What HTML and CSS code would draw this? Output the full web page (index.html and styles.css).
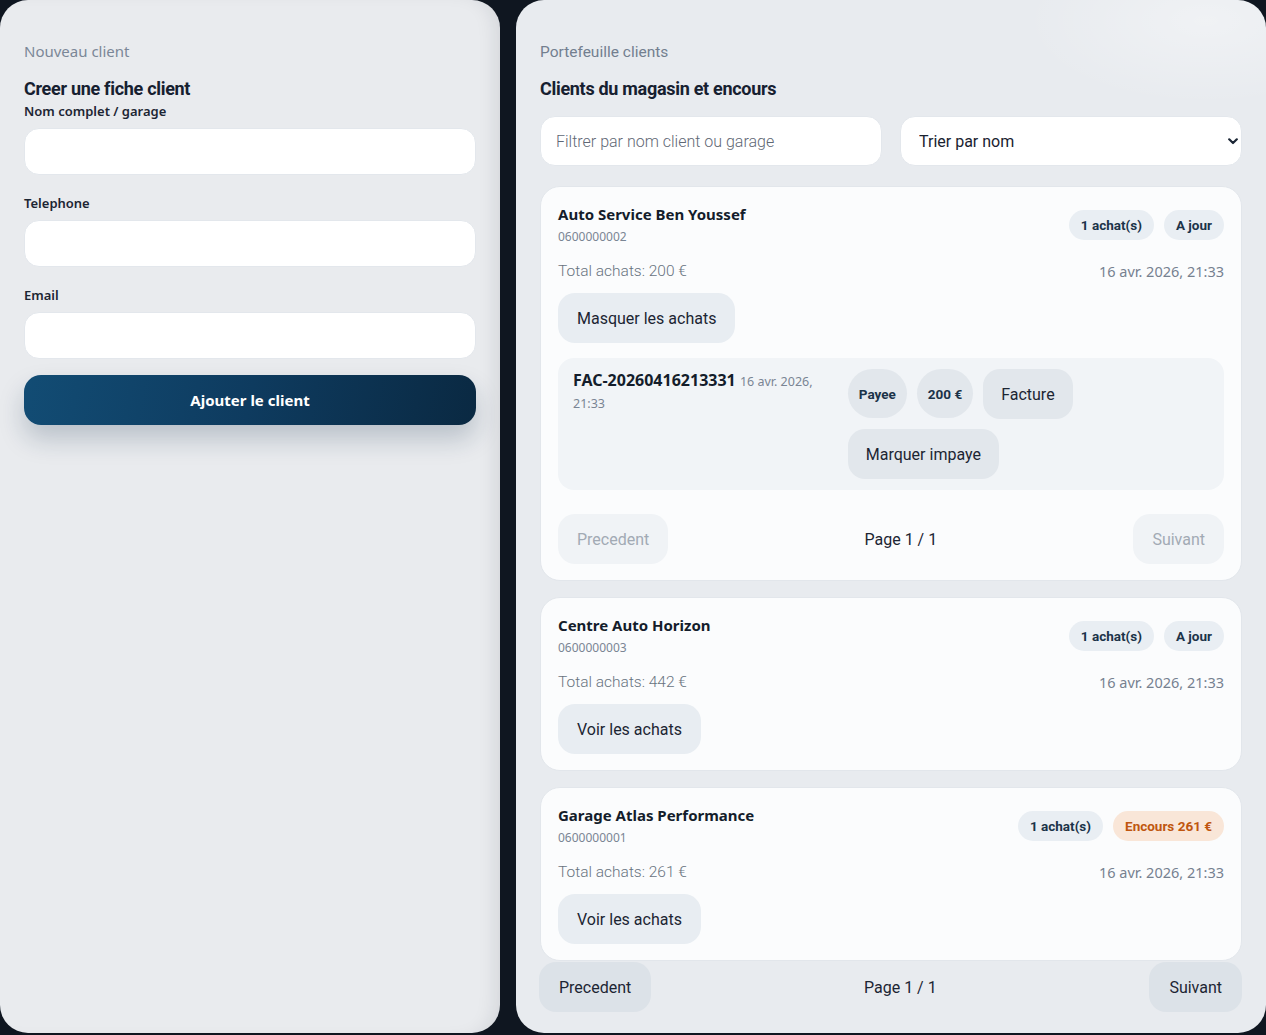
FILE: index.html
```html
<!DOCTYPE html>
<html lang="fr">
<head>
<meta charset="utf-8">
<title>Clients</title>
<link rel="stylesheet" href="styles.css">
</head>
<body>
<div class="layout">
  <section class="panel panel-left">
    <p class="eyebrow">Nouveau client</p>
    <h2 class="title">Creer une fiche client</h2>
    <label class="field-label">Nom complet / garage</label>
    <input class="field-input" type="text">
    <label class="field-label spaced">Telephone</label>
    <input class="field-input" type="text">
    <label class="field-label spaced">Email</label>
    <input class="field-input" type="text">
    <button class="primary-btn">Ajouter le client</button>
  </section>

  <section class="panel panel-right">
    <p class="eyebrow">Portefeuille clients</p>
    <h2 class="title">Clients du magasin et encours</h2>
    <div class="filters">
      <input class="filter-input" type="text" placeholder="Filtrer par nom client ou garage">
      <div class="select-wrap">
        <select class="filter-select"><option>Trier par nom</option></select>
        <svg class="chev" width="10" height="7" viewBox="0 0 10 7"><path d="M1.2 1.3 L5 5 L8.8 1.3" fill="none" stroke="#1b2635" stroke-width="2.2" stroke-linecap="round" stroke-linejoin="round"/></svg>
      </div>
    </div>

    <div class="cards">
      <article class="card">
        <div class="card-head">
          <div>
            <div class="client-name">Auto Service Ben Youssef</div>
            <div class="client-phone">0600000002</div>
          </div>
          <div class="badges">
            <span class="badge">1 achat(s)</span>
            <span class="badge">A jour</span>
          </div>
        </div>
        <div class="card-meta">
          <span>Total achats: 200 €</span>
          <span class="date">16 avr. 2026, 21:33</span>
        </div>
        <button class="soft-btn">Masquer les achats</button>
        <div class="purchases">
          <div class="purchase-info"><span class="inv">FAC-20260416213331</span> <span class="inv-date">16 avr. 2026,</span> <span class="inv-date">21:33</span></div>
          <div class="purchase-actions">
            <span class="pill">Payee</span>
            <span class="pill">200 €</span>
            <button class="act-btn">Facture</button>
            <button class="act-btn">Marquer impaye</button>
          </div>
        </div>
        <div class="pager inner">
          <button class="pager-btn" disabled>Precedent</button>
          <span class="pager-text">Page 1 / 1</span>
          <button class="pager-btn" disabled>Suivant</button>
        </div>
      </article>

      <article class="card">
        <div class="card-head">
          <div>
            <div class="client-name">Centre Auto Horizon</div>
            <div class="client-phone">0600000003</div>
          </div>
          <div class="badges">
            <span class="badge">1 achat(s)</span>
            <span class="badge">A jour</span>
          </div>
        </div>
        <div class="card-meta">
          <span>Total achats: 442 €</span>
          <span class="date">16 avr. 2026, 21:33</span>
        </div>
        <button class="soft-btn">Voir les achats</button>
      </article>

      <article class="card">
        <div class="card-head">
          <div>
            <div class="client-name">Garage Atlas Performance</div>
            <div class="client-phone">0600000001</div>
          </div>
          <div class="badges">
            <span class="badge">1 achat(s)</span>
            <span class="badge warn">Encours 261 €</span>
          </div>
        </div>
        <div class="card-meta">
          <span>Total achats: 261 €</span>
          <span class="date">16 avr. 2026, 21:33</span>
        </div>
        <button class="soft-btn">Voir les achats</button>
      </article>
    </div>

    <div class="pager outer">
      <button class="pager-btn active">Precedent</button>
      <span class="pager-text">Page 1 / 1</span>
      <button class="pager-btn active">Suivant</button>
    </div>
  </section>
</div>
</body>
</html>
```

FILE: styles.css
```css
* { box-sizing: border-box; }
html, body { margin: 0; padding: 0; }
body {
  background: #0f1620;
  height: 1035px;
  overflow: hidden;
  font-family: "Noto Sans", "Open Sans", sans-serif;
  color: #172231;
}
.layout {
  display: grid;
  grid-template-columns: 500px 750px;
  gap: 16px;
  height: 1033px;
}
.panel {
  border-radius: 28px;
  padding: 41px 24px 24px;
  display: flex;
  flex-direction: column;
  overflow: hidden;
}
.panel-left {
  background: #e9ebee;
  box-shadow: inset -14px 0 22px -14px rgba(20, 30, 45, 0.14);
}
.panel-right {
  padding-top: 42px;
  background: radial-gradient(ellipse 260px 120px at 92% 2%, rgba(255,255,255,0.35), rgba(255,255,255,0) 70%), #e8ebef;
}
.eyebrow {
  margin: 0;
  font-size: 15px;
  line-height: 20px;
  color: #7b8797;
}
.panel-right .eyebrow {
  font-family: Roboto, sans-serif;
  font-weight: 400;
  font-size: 15.5px;
  color: #737f8f;
}
.title {
  margin: 16px 0 0;
  font-family: Roboto, sans-serif;
  font-weight: 700;
  font-size: 18px;
  line-height: 24px;
  color: #162030;
  letter-spacing: -0.3px;
}
.panel-right .title { margin-top: 15px; }
.field-label {
  display: block;
  margin-top: 1px;
  font-size: 13px;
  line-height: 18px;
  font-weight: 600;
  color: #1c2533;
}
.field-label.spaced { margin-top: 19px; }
.field-input {
  margin-top: 8px;
  height: 47px;
  width: 100%;
  border: 1px solid #e3e7ec;
  border-radius: 15px;
  background: #ffffff;
  font-size: 15px;
  padding: 0 15px;
}
.primary-btn {
  margin-top: 16px;
  height: 50px;
  width: 100%;
  border: none;
  border-radius: 17px;
  background: linear-gradient(100deg, #124c74 0%, #0e3b5f 50%, #0a2942 100%);
  color: #ffffff;
  font-family: "Noto Sans", sans-serif;
  font-weight: 700;
  font-size: 15px;
  box-shadow: 0 14px 26px rgba(20, 45, 75, 0.22);
}

.filters {
  margin-top: 15px;
  display: grid;
  grid-template-columns: 1fr 1fr;
  gap: 18px;
}
.filter-input, .filter-select {
  height: 50px;
  width: 100%;
  border: 1px solid #e3e7ec;
  border-radius: 15px;
  background: #ffffff;
  font-family: Roboto, sans-serif;
  font-weight: 300;
  font-size: 16px;
  color: #1c2533;
}
.filter-input { padding: 0 15px; }
.filter-input::placeholder { color: #5f6875; }
.select-wrap { position: relative; }
.filter-select {
  appearance: none;
  -webkit-appearance: none;
  padding: 0 18px;
  font-weight: 400;
  color: #1a2230;
}
.chev { position: absolute; right: 4px; top: 22px; }

.cards {
  margin-top: 20px;
  display: flex;
  flex-direction: column;
  gap: 16px;
}
.card {
  background: #fbfcfd;
  border: 1px solid #e2e6eb;
  border-radius: 20px;
  padding: 18px 17px 16px;
  display: flex;
  flex-direction: column;
  align-items: flex-start;
}
.card-head {
  width: 100%;
  display: flex;
  justify-content: space-between;
  align-items: center;
}
.client-name {
  font-weight: 700;
  font-size: 15px;
  line-height: 19px;
  color: #141d2b;
}
.client-phone {
  margin-top: 5px;
  font-size: 12px;
  line-height: 16px;
  color: #7a8594;
}
.badges { display: flex; gap: 10px; }
.badge {
  height: 30px;
  padding: 0 12px;
  border-radius: 15px;
  background: #e9eef3;
  color: #1b3349;
  font-family: Roboto, sans-serif;
  font-weight: 700;
  font-size: 13.5px;
  display: flex;
  align-items: center;
}
.badge.warn { background: #f9e6d8; color: #c0560f; }
.card-meta {
  width: 100%;
  margin-top: 17px;
  display: flex;
  justify-content: space-between;
  align-items: center;
  font-family: Roboto, sans-serif;
  font-weight: 300;
  font-size: 15.5px;
  line-height: 19px;
  color: #68737f;
}
.card-meta .date {
  font-family: "Noto Sans", sans-serif;
  font-weight: 400;
  font-size: 14.5px;
  color: #768190;
}
.soft-btn {
  margin-top: 12px;
  height: 50px;
  padding: 0 19px;
  border: none;
  border-radius: 17px;
  background: #e8edf2;
  font-family: Roboto, sans-serif;
  font-weight: 400;
  font-size: 16px;
  color: #1c2533;
}
.purchases {
  width: 100%;
  margin-top: 15px;
  background: #f1f4f7;
  border-radius: 16px;
  padding: 11px 14px 11px 15px;
  display: grid;
  grid-template-columns: minmax(0, 1fr) minmax(0, 1.4fr);
  gap: 16px;
}
.purchase-info {
  line-height: 21px;
  padding-top: 1px;
}
.inv {
  font-weight: 700;
  font-size: 16px;
  color: #141d2b;
}
.inv-date {
  font-size: 12.5px;
  color: #7a8594;
}
.purchase-actions {
  display: flex;
  flex-wrap: wrap;
  gap: 10px 10px;
}
.pill {
  height: 49px;
  padding: 0 11px;
  border-radius: 25px;
  background: #e2e7ec;
  color: #1b3349;
  font-family: Roboto, sans-serif;
  font-weight: 700;
  font-size: 13.5px;
  display: flex;
  align-items: center;
}
.act-btn {
  height: 50px;
  padding: 0 18px;
  border: none;
  border-radius: 17px;
  background: #e2e7ec;
  font-family: Roboto, sans-serif;
  font-size: 16px;
  color: #1c2533;
}
.pager {
  width: 100%;
  display: flex;
  justify-content: space-between;
  align-items: center;
}
.pager.inner { margin-top: 24px; }
.pager.outer { margin-top: 1px; margin-left: -1px; width: calc(100% + 1px); }
.pager-btn {
  height: 50px;
  padding: 0 19px;
  border: none;
  border-radius: 17px;
  background: #f0f3f6;
  font-family: Roboto, sans-serif;
  font-size: 16px;
  color: #a2aab4;
}
.pager-btn.active {
  background: #dce2e8;
  color: #1c2533;
  padding: 0 20px;
}
.pager-text {
  font-family: Roboto, sans-serif;
  font-size: 16px;
  color: #1c2533;
}
```
